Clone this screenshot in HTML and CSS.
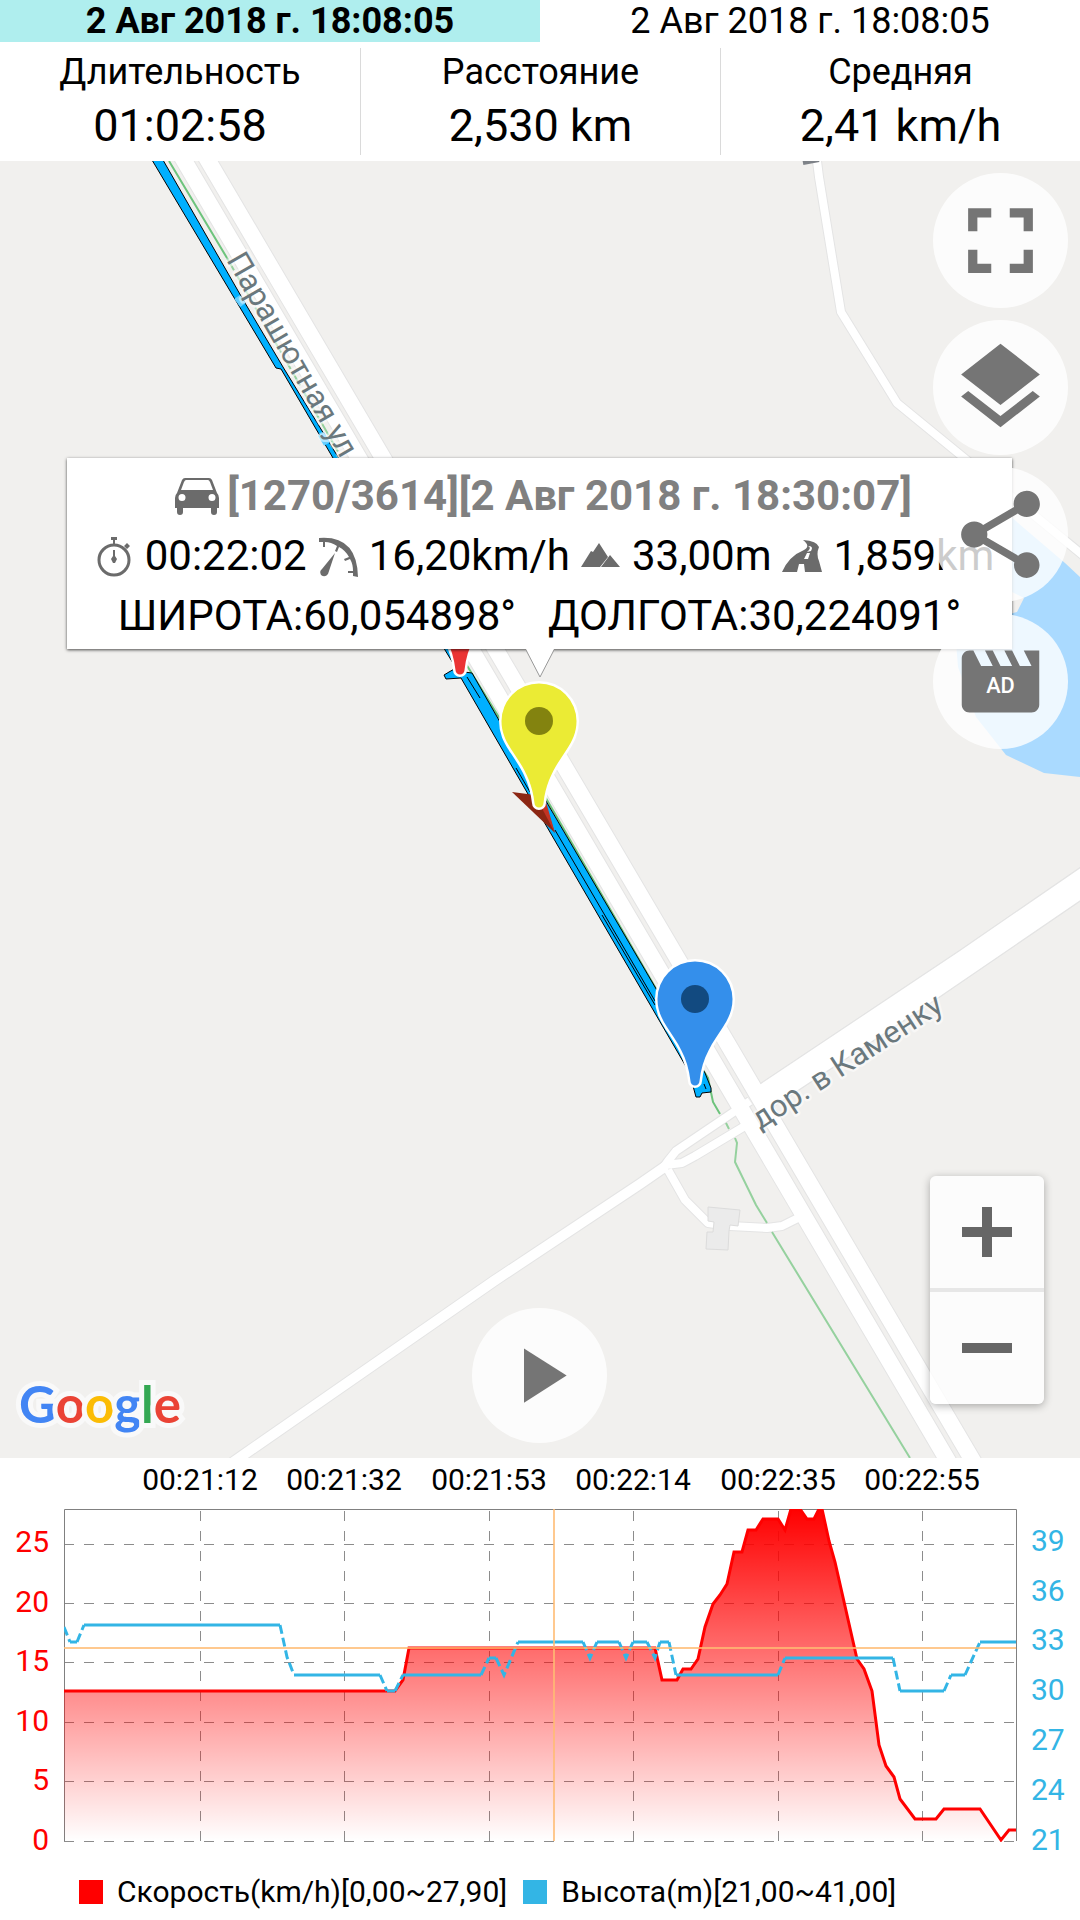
FILE: index.html
```html
<!DOCTYPE html>
<html lang="ru">
<head>
<meta charset="utf-8">
<meta name="viewport" content="width=device-width, initial-scale=1">
<title>Трек</title>
<link rel="stylesheet" href="styles.css">
</head>
<body>
<div class="app">
  <nav class="tabs">
    <button class="tab tab-active" type="button">2 Авг 2018 г. 18:08:05</button>
    <button class="tab" type="button">2 Авг 2018 г. 18:08:05</button>
  </nav>

  <dl class="stats">
    <div class="stat"><dt>Длительность</dt><dd>01:02:58</dd></div>
    <div class="stat"><dt>Расстояние</dt><dd>2,530 km</dd></div>
    <div class="stat"><dt>Средняя</dt><dd>2,41 km/h</dd></div>
  </dl>

  <main class="map">
    <svg class="map-canvas" viewBox="0 161 1080 1297" preserveAspectRatio="xMidYMid slice" aria-hidden="true">
      <defs>
        <path id="pin" d="M-37.5 0A37.5 37.5 0 0 1 37.5 0C37.5 12 33 20 28 28C18 43 7 58 4.500 82A4.500 4.500 0 0 1-4.500 82C-7 58-18 43-28 28C-33 20-37.500 12-37.500 0Z"/>
        <g id="side-roads" fill="none" stroke-linejoin="round">
          <path d="M817 150V161L819 177L841 312L897 403L963 457L1018 502L1090 561"/>
          <path d="M750 1101L676 1151L668 1161L663 1168M750 1123L695 1156L682 1163L666 1165"/>
          <path d="M668 1170L685 1200L708 1223L730 1226L767 1228L782 1226L806 1214"/>
        </g>
        <path id="west-road" fill="none" d="M666 1166L640 1184L494 1281L239 1458L232 1463"/>
        <path id="highway" fill="none" d="M172 140L958 1478M196 140L983 1478"/>
      </defs>

      <rect class="land" y="161" width="1080" height="1297"/>
      <path class="water" d="M1010 516L1065 563L1080 577V777L1044 773L1006 755L976 717L958 667L955 630L1013 613L1017 612L1024 598L1008 590Z"/>

      <use href="#side-roads" class="casing" stroke-width="10"/>
      <use href="#west-road" class="casing" stroke-width="12"/>
      <use href="#highway" class="casing" stroke-width="18"/>
      <path class="road-edge" d="M1082 866L960 950L755 1087L766 1112L940 997L1082 900Z"/>
      <use href="#side-roads" class="road" stroke-width="8"/>
      <use href="#west-road" class="road" stroke-width="10"/>
      <use href="#highway" class="road" stroke-width="16"/>
      <path class="road-body" d="M1082 867L960 951L755 1088L766 1111L940 996L1082 899Z"/>
      <path class="building" d="M708 1207L740 1210L738 1226L730 1225L729 1231L728 1250L706 1249L707 1232L713 1232L714 1222L708 1221Z"/>
      <path class="station" d="M803 163L819 160"/>

      <path class="path-green" d="M169 161L227 258M466 664L500 719L547 800L655 987L703 1070L708 1078L713 1102L720 1114"/>
      <path class="path-green path-dim" d="M227 258L340 455" stroke-dasharray="14 5"/>
      <path class="path-green path-dim" d="M726 1123L729 1129M735 1138L737 1143L735 1162L756 1205L767 1223M772 1232L910 1458"/>

      <path class="track" d="M152 160L276 368L281 369L340 470L445 650L456 668L449 672L444 675L446 679L461 678L547 827L688 1070L693 1086L696 1097L700 1097L702 1093L711 1092L711 1088L705 1073L655 987L553 813L500 722L472 673L464 672L456 650L338 457L283 367L245 303L163 160Z"/>
      <path class="track-seam" d="M467 677L480 698M516 768L530 792M555 830L655 1001M602 915L655 1005M704 1084L706 1089"/>
      <path class="track-mute" d="M237 297L243 305M321 434L327 444"/>

      <text class="map-label" transform="translate(226 260) rotate(60)">Парашютная ул.</text>
      <text class="map-label" transform="translate(760 1130) rotate(-33)">дор. в Каменку</text>

      <path fill="#8c2613" d="M512 792L535 795L548 812L555 833Z"/>
      <path fill="#c33323" d="M535 795L546 802L555 833Z"/>
      <g transform="translate(460 588)"><use href="#pin" class="pin" fill="#eb3434"/></g>
      <g transform="translate(539 721)"><use href="#pin" class="pin" fill="#ebeb34"/><circle r="14" fill="#83830f"/></g>
      <g transform="translate(695 999)"><use href="#pin" class="pin" fill="#348feb"/><circle r="14" fill="#124a80"/></g>
    </svg>

    <section class="callout">
      <h1 class="callout-row callout-title">
        <svg class="icon-car" viewBox="0 0 44 38" aria-hidden="true"><path fill-rule="evenodd" d="M10 1H34Q36 1 37 3L42 16Q44 18 44 21V31H42V35Q42 38 39 38Q36 38 36 35V31H8V35Q8 38 5 38Q2 38 2 35V31H0V21Q0 18 2 16L7 3Q8 1 10 1ZM11 3Q10 3 9 5L6 13H38L35 5Q34 3 33 3ZM7 17A3.500 3.500 0 1 0 7 24A3.500 3.500 0 1 0 7 17ZM37 17A3.500 3.500 0 1 0 37 24A3.500 3.500 0 1 0 37 17Z"/></svg>
        <span>[1270/3614][2 Авг 2018 г. 18:30:07]</span>
      </h1>
      <div class="callout-row callout-data">
        <svg class="icon-row" viewBox="0 0 42 42" aria-hidden="true"><circle cx="21" cy="25" r="15" fill="none" stroke="#6b6b6b" stroke-width="3"/><path d="M18 2H24V5H22V10H20V5H18ZM31 11L34 8L37 11L34 14ZM20 15H22V21L24 24L22 28H20L18 24L20 21Z"/></svg>
        <span>00:22:02</span>
        <svg class="icon-row" viewBox="0 0 42 42" aria-hidden="true"><path d="M2 3Q40 0 41 42L36 41V38H31V36H36Q36 29 33 24L28 26L27 24L32 22Q28 15 22 12L20 17L18 16L20 11Q14 7 8 7V12H6V7H2ZM18 18L11 39Q8 43 4 40Q2 36 5 34Z"/></svg>
        <span>16,20km/h</span>
        <svg class="icon-row" viewBox="0 0 42 42" aria-hidden="true"><path d="M1 32L11 16L13 17L19 8L28 22L20 32ZM21 32L30 20L40 32Z"/></svg>
        <span>33,00m</span>
        <svg class="icon-row" viewBox="0 0 42 42" aria-hidden="true"><path fill-rule="evenodd" d="M22 5Q36 6 38 12Q35 19 38 26L41 37H24L23 29H18L16 37H1Q8 21 23 15Q30 11 22 5ZM27 11Q30 12 28 15L26 17L30 16Q33 11 27 11ZM26 18L23 24H27L29 18Z"/></svg>
        <span>1,859km</span>
      </div>
      <div class="callout-row callout-coords">
        <span>ШИРОТА:60,054898°</span>
        <span>ДОЛГОТА:30,224091°</span>
      </div>
      <svg class="callout-tip" viewBox="0 0 28 30" aria-hidden="true"><path fill="#fff" d="M0 0H28L14 28Z"/><path fill="none" stroke="#999" d="M0 1L14 28L28 1"/></svg>
    </section>

    <div class="tools">
      <button class="round" type="button" aria-label="На весь экран"><svg width="111" height="111" viewBox="0 0 24 24"><path d="M5 5H10V7H7V10H5ZM14 5H19V10H17V7H14ZM5 14H7V17H10V19H5ZM17 14H19V19H14V17H17Z"/></svg></button>
      <button class="round" type="button" aria-label="Слои"><svg width="105" height="105" viewBox="0 0 24 24"><path d="M11.990 18.540l-7.370-5.730L3 14.070l9 7 9-7-1.630-1.270zM12 16l7.360-5.730L21 9l-9-7-9 7 1.630 1.270z"/></svg></button>
      <button class="round" type="button" aria-label="Поделиться"><svg width="105" height="105" viewBox="0 0 24 24"><path d="M18 16.080c-.76 0-1.440.3-1.960.77L8.910 12.700c.05-.23.09-.46.09-.7s-.04-.47-.09-.7l7.050-4.110c.54.5 1.250.81 2.040.81 1.660 0 3-1.340 3-3s-1.340-3-3-3-3 1.340-3 3c0 .24.04.47.09.7L8.040 9.810C7.500 9.310 6.790 9 6 9c-1.660 0-3 1.340-3 3s1.340 3 3 3c.79 0 1.500-.31 2.040-.81l7.120 4.160c-.05.21-.08.43-.08.65 0 1.610 1.310 2.920 2.920 2.920s2.920-1.310 2.920-2.920-1.310-2.920-2.920-2.920z"/></svg></button>
      <button class="round" type="button" aria-label="Реклама"><svg width="93" height="93" viewBox="0 0 94 94"><path transform="scale(3.917)" d="M18 4l2 4h-3l-2-4h-2l2 4h-3l-2-4H8l2 4H7L5 4H4c-1.100 0-2 .9-2 2v12c0 1.100.9 2 2 2h16c1.100 0 2-.9 2-2V4h-4z"/><text class="ad-text" x="47" y="59">AD</text></svg></button>
    </div>

    <button class="round play" type="button" aria-label="Воспроизвести"><svg width="93" height="93" viewBox="0 0 24 24"><path d="M8 5v14l11-7z"/></svg></button>

    <div class="zoom">
      <button type="button" aria-label="Приблизить"><svg width="50" height="50" viewBox="0 0 50 50"><path d="M20 0H30V20H50V30H30V50H20V30H0V20H20Z"/></svg></button>
      <button type="button" aria-label="Отдалить"><svg width="50" height="50" viewBox="0 0 50 50"><path d="M0 20H50V30H0Z"/></svg></button>
    </div>

    <a class="google" href="#"><span class="g-blue">G</span><span class="g-red">o</span><span class="g-yellow">o</span><span class="g-blue">g</span><span class="g-green">l</span><span class="g-red">e</span></a>
  </main>

  <figure class="chart">
    <svg class="plot" viewBox="0 1458 1080 408" role="img" aria-label="График скорости и высоты">
      <defs>
        <linearGradient id="fade" gradientUnits="userSpaceOnUse" x1="0" y1="1509" x2="0" y2="1841">
          <stop offset="0" stop-color="#f00"/><stop offset="1" stop-color="#f00" stop-opacity="0"/>
        </linearGradient>
        <clipPath id="plot-area"><rect x="64" y="1509" width="953" height="333"/></clipPath>
      </defs>
      <g class="axis-time">
        <text x="200" y="1490">00:21:12</text><text x="344" y="1490">00:21:32</text><text x="489" y="1490">00:21:53</text>
        <text x="633" y="1490">00:22:14</text><text x="778" y="1490">00:22:35</text><text x="922" y="1490">00:22:55</text>
      </g>
      <g class="axis-speed">
        <text x="49" y="1552">25</text><text x="49" y="1612">20</text><text x="49" y="1671">15</text>
        <text x="49" y="1731">10</text><text x="49" y="1790">5</text><text x="49" y="1850">0</text>
      </g>
      <g class="axis-height">
        <text x="1031" y="1551">39</text><text x="1031" y="1601">36</text><text x="1031" y="1650">33</text><text x="1031" y="1700">30</text>
        <text x="1031" y="1750">27</text><text x="1031" y="1800">24</text><text x="1031" y="1850">21</text>
      </g>
      <path class="grid" d="M64 1544.500H1016M64 1603.500H1016M64 1662.500H1016M64 1722.500H1016M64 1781.500H1016M64 1841.500H1016"/>
      <path class="grid" d="M200.500 1511V1841M344.500 1511V1841M489.500 1511V1841M633.500 1511V1841M778.500 1511V1841M922.500 1511V1841"/>
      <path class="frame" d="M64.500 1841V1509.500H1016.500V1841"/>
      <g clip-path="url(#plot-area)">
        <path fill="url(#fade)" d="M64 1841V1691H395L403 1680L409 1648H655L662 1680H677L683 1669H691L698 1659L705 1627L713 1604L720 1595L727 1584L734 1552H742L748 1530H756L763 1519H778L785 1530L791 1509H800L807 1519H814L819 1509H822L829 1541L835 1562L857 1659L864 1669L872 1691L879 1745L886 1766L894 1777L900 1799L915 1819H936L944 1809H980L1001 1840L1009 1830H1016V1841Z"/>
        <path class="speed-line" d="M64 1691H395L403 1680L409 1648H655L662 1680H677L683 1669H691L698 1659L705 1627L713 1604L720 1595L727 1584L734 1552H742L748 1530H756L763 1519H778L785 1530L791 1509H800L807 1519H814L819 1509H822L829 1541L835 1562L857 1659L864 1669L872 1691L879 1745L886 1766L894 1777L900 1799L915 1819H936L944 1809H980L1001 1840L1009 1830H1016"/>
        <path class="height-line" d="M70 1642H77M84 1625H280M294 1675H380M387 1691H395M403 1675H481M489 1658H496M518 1642H583M597 1642H619M633 1642H647M660 1642H669M676 1675H778M785 1658H893M900 1691H944M951 1675H965M980 1642H1016"/>
        <path class="height-line height-slope" d="M64 1627L70 1642M77 1642L84 1625M280 1625L287 1657L294 1675M380 1675L387 1691M395 1691L403 1675M481 1675L489 1658M496 1658L504 1675L518 1642M583 1642L590 1658L597 1642M619 1642L626 1658L633 1642M647 1642L655 1658L660 1642M669 1642L676 1675M778 1675L785 1658M893 1658L900 1691M944 1691L951 1675M965 1675L980 1642"/>
        <path class="cursor" d="M64 1648H1016M554 1509V1841"/>
      </g>
    </svg>
    <figcaption class="legend">
      <span class="key key-speed">Скорость(km/h)[0,00~27,90]</span>
      <span class="key key-height">Высота(m)[21,00~41,00]</span>
    </figcaption>
  </figure>
</div>
</body>
</html>
```
FILE: styles.css
```css
* {
  box-sizing: border-box;
}

body {
  margin: 0;
  background: #fff;
  color: #000;
  font-family: Roboto, "Liberation Sans", sans-serif;
}

button {
  margin: 0;
  padding: 0;
  border: 0;
  background: none;
  color: inherit;
  font: inherit;
  cursor: pointer;
}

.app {
  display: flex;
  flex-direction: column;
  min-height: 100vh;
}

/* Header */
.tabs {
  display: grid;
  grid-template-columns: 1fr 1fr;
}

.tab {
  font-size: 36px;
  line-height: 42px;
}

.tab-active {
  background: #afeeee;
  font-weight: 700;
}

.stats {
  display: grid;
  grid-template-columns: repeat(3, 1fr);
  margin: 0;
  padding: 6px 0;
  text-align: center;
}

.stat + .stat {
  border-left: 1px solid #dadada;
}

.stat dt {
  font-size: 36px;
  line-height: 48px;
}

.stat dd {
  margin: 0;
  font-size: 45px;
  line-height: 59px;
}

/* Map */
.map {
  position: relative;
  flex: 1;
  min-height: 900px;
  overflow: hidden;
  background: #f1f0ee;
}

.map-canvas {
  position: absolute;
  inset: 0;
  width: 100%;
  height: 100%;
}

.land { fill: #f1f0ee; }
.water { fill: #aadaff; }
.casing { stroke: #e4e4e4; }
.road { stroke: #fff; }
.road-edge { fill: #e4e4e4; stroke: #e4e4e4; }
.road-body { fill: #fff; }
.building { fill: #ebebeb; stroke: #dcdcdc; }
.station { stroke: #7e8288; stroke-width: 4; }

.path-green {
  fill: none;
  stroke: #6dc37c;
  stroke-width: 2;
}

.path-dim {
  opacity: 0.7;
}

.track {
  fill: #00b0ff;
  stroke: #000;
  stroke-linejoin: round;
}

.track-seam {
  fill: none;
  stroke: #000;
}

.track-mute {
  fill: none;
  stroke: #66ceff;
  stroke-width: 7;
}

.map-label {
  fill: #6a787d;
  stroke: rgba(255, 255, 255, 0.5);
  stroke-width: 5px;
  stroke-linejoin: round;
  paint-order: stroke;
  font-size: 31px;
}

.pin {
  stroke: #fff;
  stroke-width: 5px;
  paint-order: stroke;
}

/* Point details */
.callout {
  position: absolute;
  top: 297px;
  left: 67px;
  right: 68px;
  padding: 8px 0 3px;
  background: #fff;
  box-shadow: 0 1px 3px rgba(0, 0, 0, 0.7);
  font-size: 42px;
  line-height: 60px;
  white-space: nowrap;
}

.callout-row {
  display: flex;
  align-items: center;
  justify-content: center;
  gap: 10px;
}

.callout-title {
  margin: 0;
  padding-left: 8px;
  gap: 8px;
  color: #808080;
  font-size: inherit;
}

.callout-data {
  padding-left: 8px;
}

.callout-coords {
  gap: 32px;
}

.callout svg {
  flex: none;
  fill: #6b6b6b;
}

.icon-car {
  width: 44px;
  height: 38px;
}

.icon-row {
  width: 42px;
  height: 42px;
}

.callout-tip {
  position: absolute;
  top: 100%;
  left: 50%;
  width: 28px;
  height: 30px;
  margin-left: -14px;
}

/* Controls over the map */
.tools {
  position: absolute;
  top: 12px;
  right: 12px;
  display: grid;
  gap: 12px;
}

.round {
  display: grid;
  place-items: center;
  width: 135px;
  height: 135px;
  border-radius: 50%;
  background: rgba(255, 255, 255, 0.8);
  fill: #757575;
}

.ad-text {
  fill: #fff;
  font-size: 22px;
  font-weight: 500;
  text-anchor: middle;
}

.play {
  position: absolute;
  bottom: 15px;
  left: 50%;
  margin-left: -68px;
}

.zoom {
  position: absolute;
  right: 36px;
  bottom: 54px;
  display: grid;
  border-radius: 6px;
  background: rgba(255, 255, 255, 0.8);
  box-shadow: 0 2px 8px rgba(0, 0, 0, 0.3);
}

.zoom button {
  display: grid;
  place-items: center;
  width: 114px;
  height: 112px;
  fill: #666;
}

.zoom button + button {
  height: 116px;
  border-top: 4px solid #e7e7e7;
}

.google {
  position: absolute;
  left: 19px;
  bottom: 22px;
  font-family: Lato, sans-serif;
  font-size: 51px;
  font-weight: 700;
  line-height: 64px;
  text-decoration: none;
  -webkit-text-stroke: 10px #f9f9f9;
  paint-order: stroke;
}

.g-blue { color: #4285f4; }
.g-red { color: #ea4335; }
.g-yellow { color: #fbbc05; }
.g-green { color: #34a853; }

/* Chart */
.chart {
  margin: 0;
}

.plot {
  display: block;
  width: 100%;
  height: auto;
  font-size: 30px;
}

.axis-time { text-anchor: middle; }
.axis-speed { fill: #f00; text-anchor: end; }
.axis-height { fill: #33b5e5; }

.grid {
  fill: none;
  stroke: #8c8c8c;
  stroke-dasharray: 10 10;
}

.frame {
  fill: none;
  stroke: #808080;
}

.speed-line {
  fill: none;
  stroke: #f00;
  stroke-width: 3;
}

.height-line {
  fill: none;
  stroke: #33b5e5;
  stroke-width: 3;
}

.height-slope {
  stroke-dasharray: 9 4;
}

.cursor {
  fill: none;
  stroke: #ffbb73;
  stroke-opacity: 0.8;
  stroke-width: 2;
}

.legend {
  display: flex;
  gap: 16px;
  padding: 8px 79px 10px;
  font-size: 30px;
  line-height: 36px;
  white-space: nowrap;
}

.key {
  display: flex;
  align-items: center;
  gap: 14px;
}

.key::before {
  content: "";
  width: 24px;
  height: 24px;
  background: #f00;
}

.key-height::before {
  background: #33b5e5;
}
```
